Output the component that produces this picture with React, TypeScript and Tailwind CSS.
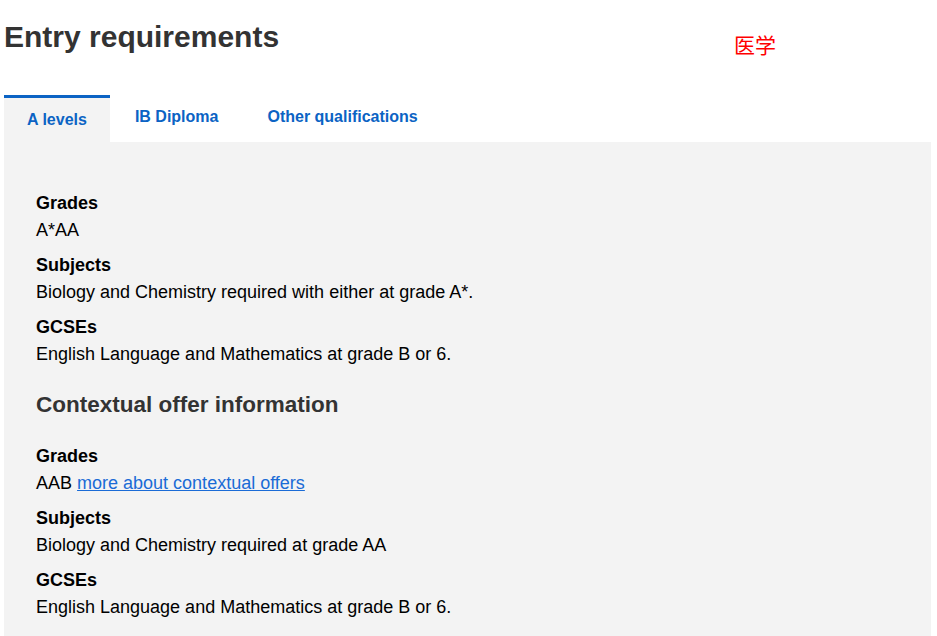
import React, { useState } from 'react';

const tabs = ['A levels', 'IB Diploma', 'Other qualifications'];

const Field = ({ label, children }: { label: string; children: React.ReactNode }) => (
  <div className="mb-[8px]">
    <div className="font-bold leading-[27px]">{label}</div>
    <div className="leading-[27px]">{children}</div>
  </div>
);

const App: React.FC = () => {
  const [active, setActive] = useState(0);

  return (
    <div className="min-h-[636px] bg-white pl-[4px] pr-[6px] text-[18px] text-black" style={{ fontFamily: '"Liberation Sans", Arial, sans-serif' }}>
      <div className="flex items-start pt-[19px]">
        <h1 className="text-[30px] font-bold leading-[36px] text-[#333]">Entry requirements</h1>
        <span className="ml-[455px] mt-[12px] text-[21px] leading-[30px] text-[#ff0000]" style={{ fontFamily: '"Liberation Sans", "Noto Sans CJK SC", sans-serif' }}>医学</span>
      </div>

      <div className="mt-[34px] flex">
        {tabs.map((t, i) => (
          <button
            key={t}
            onClick={() => setActive(i)}
            className={
              i === active
                ? 'h-[47px] border-t-[3px] border-[#0b63c4] bg-[#f3f3f3] px-[23px] pt-0 text-[16px] font-bold text-[#0b63c4]'
                : 'h-[47px] pl-[25px] pr-[24px] pb-[3px] text-[16px] font-bold text-[#0b63c4]'
            }
          >
            {t}
          </button>
        ))}
      </div>

      <div className="bg-[#f3f3f3] px-[32px] pt-[48px] pb-[20px]">
        <Field label="Grades">A*AA</Field>
        <Field label="Subjects">Biology and Chemistry required with either at grade A*.</Field>
        <Field label="GCSEs">English Language and Mathematics at grade B or 6.</Field>

        <h2 className="mt-[20px] mb-[21px] text-[22.5px] font-bold text-[#333]">Contextual offer information</h2>

        <Field label="Grades">
          AAB{' '}
          <a href="#" className="text-[#1a6bd6] underline">more about contextual offers</a>
        </Field>
        <Field label="Subjects">Biology and Chemistry required at grade AA</Field>
        <Field label="GCSEs">English Language and Mathematics at grade B or 6.</Field>
      </div>
    </div>
  );
};

export default App;
